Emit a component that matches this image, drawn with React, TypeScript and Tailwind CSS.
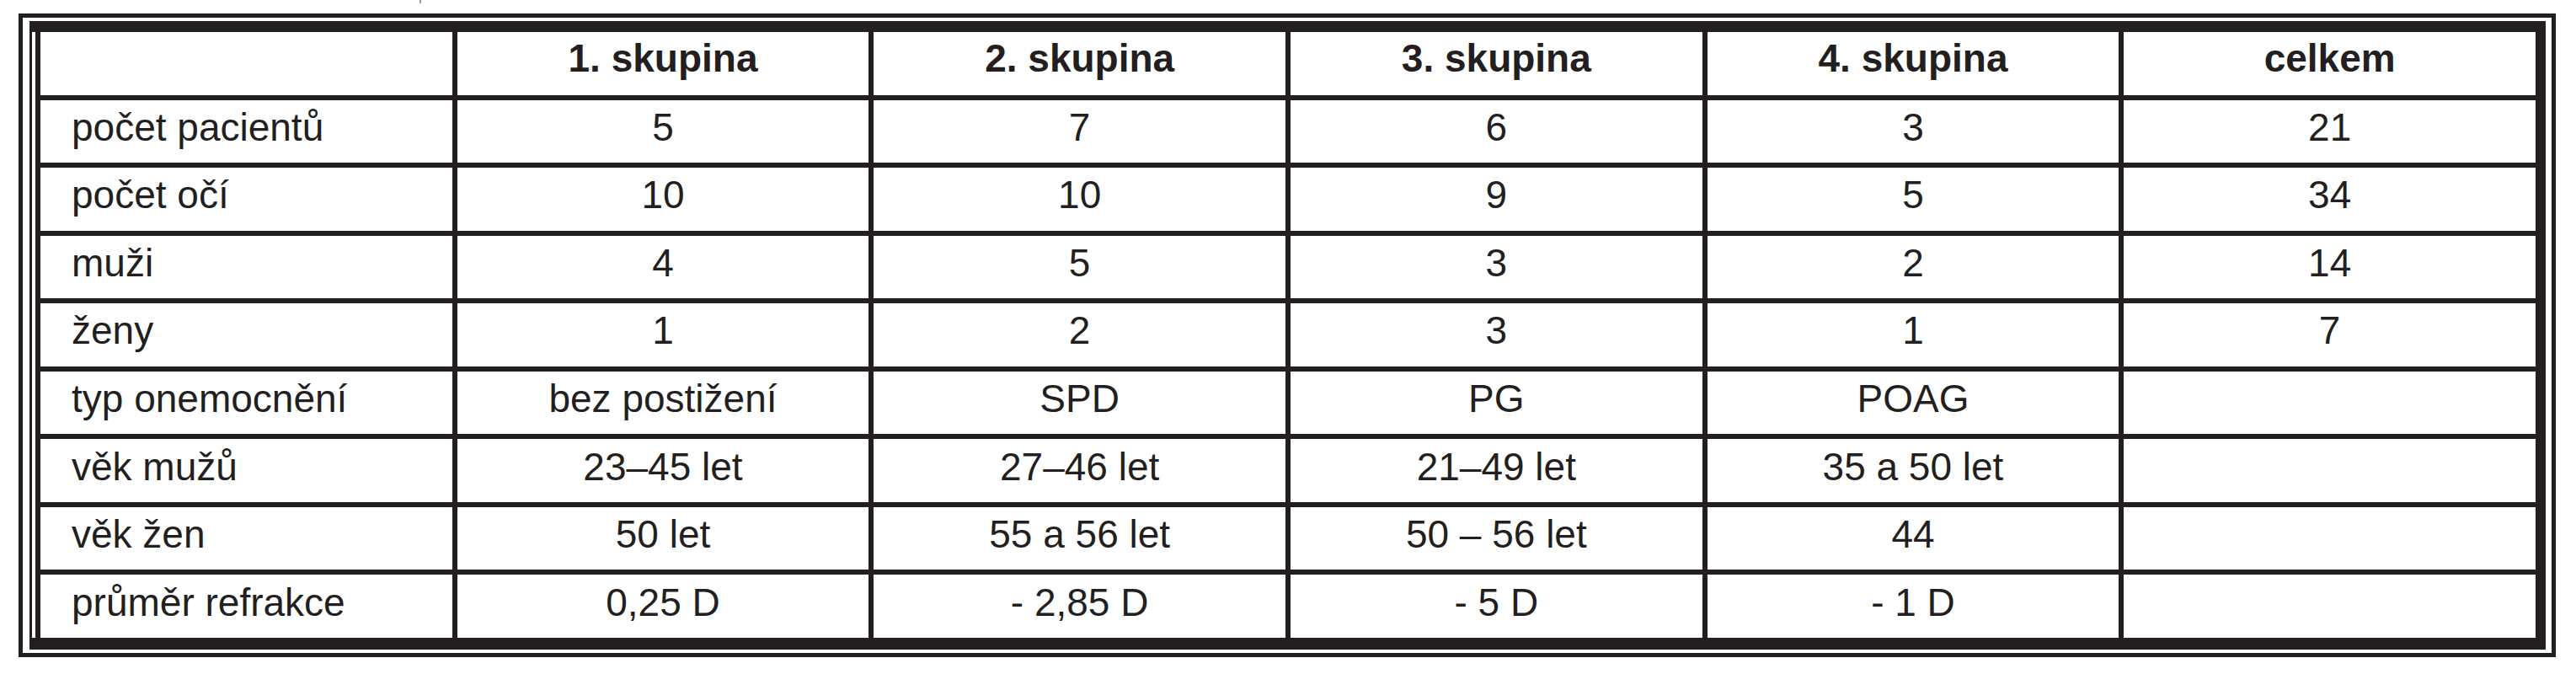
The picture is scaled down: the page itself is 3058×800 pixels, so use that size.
const head = ["", "1. skupina", "2. skupina", "3. skupina", "4. skupina", "celkem"];

const rows: string[][] = [
  ["počet pacientů", "5", "7", "6", "3", "21"],
  ["počet očí", "10", "10", "9", "5", "34"],
  ["muži", "4", "5", "3", "2", "14"],
  ["ženy", "1", "2", "3", "1", "7"],
  ["typ onemocnění", "bez postižení", "SPD", "PG", "POAG", ""],
  ["věk mužů", "23–45 let", "27–46 let", "21–49 let", "35 a 50 let", ""],
  ["věk žen", "50 let", "55 a 56 let", "50 – 56 let", "44", ""],
  ["průměr refrakce", "0,25 D", "- 2,85 D", "- 5 D", "- 1 D", ""],
];

export default function App() {
  return (
    <div className="w-[3058px] h-[800px] bg-white text-[#231f20] font-['Liberation_Sans',Arial,sans-serif]">
      {/* cut-off caption stroke above the table */}
      <div className="h-[16px]">
        <div className="ml-[498px] w-[2px] h-[4px] bg-[#9a9898]" />
      </div>
      <div className="ml-[22px] w-[3012px] border-[5px] border-[#231f20] bg-white pt-[4px] pl-[8px] pr-[7px] pb-[4px]">
        <div className="border-t-[13px] border-b-[14px] border-l-[3px] border-r-[12px] border-[#231f20] bg-white pl-[4px]">
          <div className="grid grid-cols-6 grid-rows-9 gap-[6px] h-[719px] bg-[#231f20] pl-[6px]">
            {head.map((h, i) => (
              <div
                key={"h" + i}
                className="bg-white flex items-center justify-center pb-[12px] text-[46px] font-bold leading-none"
              >
                {h}
              </div>
            ))}
            {rows.map((r, ri) =>
              r.map((c, ci) => (
                <div
                  key={ri + "-" + ci}
                  className={`bg-white flex items-center pb-[10px] text-[46px] leading-none ${
                    ci === 0 ? "justify-start pl-[37px]" : "justify-center"
                  }`}
                >
                  {c}
                </div>
              ))
            )}
          </div>
        </div>
      </div>
    </div>
  );
}
